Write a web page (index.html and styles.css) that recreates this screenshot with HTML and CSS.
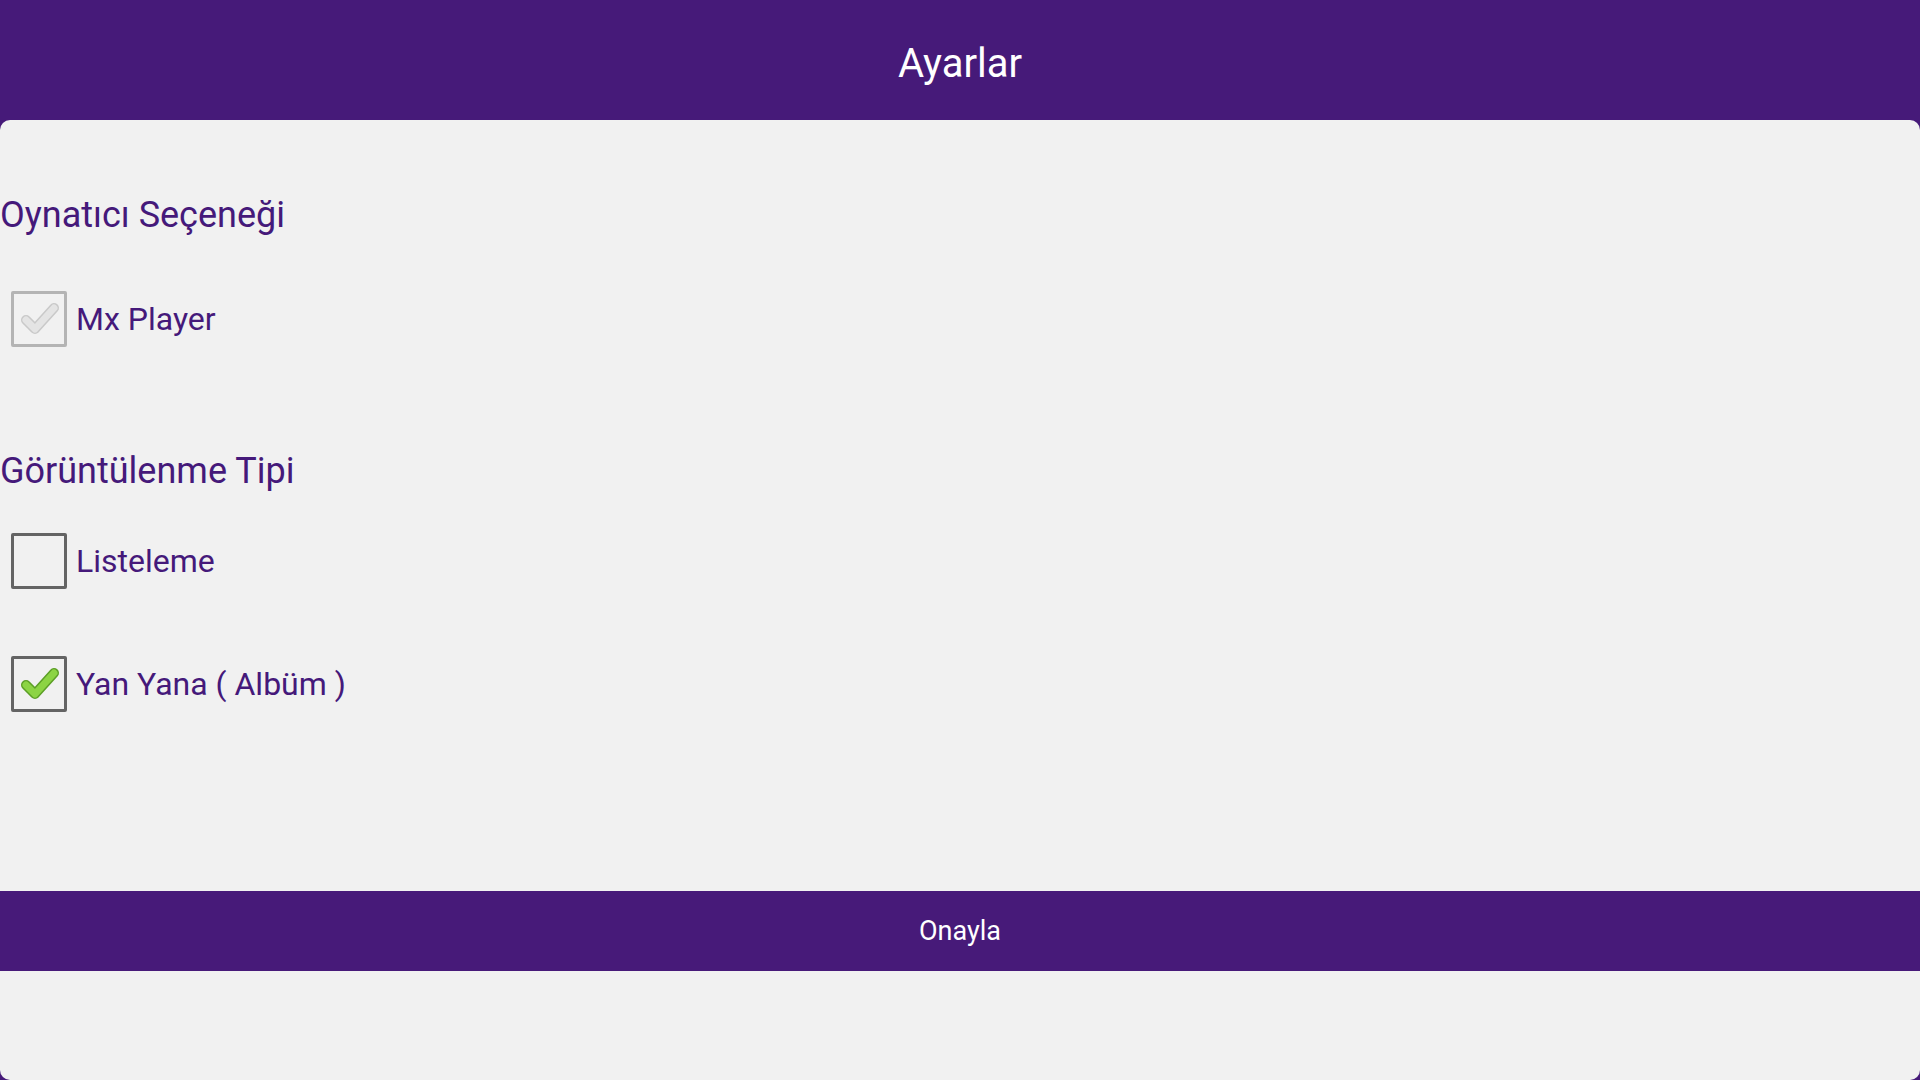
FILE: index.html
```html
<!DOCTYPE html>
<html lang="tr">
  <head>
    <meta charset="UTF-8" />
    <meta name="viewport" content="width=device-width, initial-scale=1.0" />
    <title>Ayarlar</title>
    <link rel="stylesheet" href="styles.css">
  </head>
  <body>
    <div class="header">
      <h1>Ayarlar</h1>
    </div>

    <div class="settings">
      <h2 class="section-title first">Oynatıcı Seçeneği</h2>
      <div class="option">
        <span class="box disabled">
          <svg viewBox="0 0 56 56" width="56" height="56">
            <path d="M15 29 L24 38 L43 17" class="check-edge gray-edge" />
            <path d="M15 29 L24 38 L43 17" class="check-fill gray-fill" />
          </svg>
        </span>
        <span class="label">Mx Player</span>
      </div>

      <h2 class="section-title second">Görüntülenme Tipi</h2>
      <div class="option">
        <span class="box"></span>
        <span class="label">Listeleme</span>
      </div>
      <div class="option last">
        <span class="box">
          <svg viewBox="0 0 56 56" width="56" height="56">
            <path d="M15 29 L24 38 L43 17" class="check-edge green-edge" />
            <path d="M15 29 L24 38 L43 17" class="check-fill green-fill" />
          </svg>
        </span>
        <span class="label">Yan Yana ( Albüm )</span>
      </div>

      <button class="confirm" type="button">Onayla</button>
    </div>
  </body>
</html>
```

FILE: styles.css
```css
* {
  margin: 0;
  padding: 0;
  box-sizing: border-box;
  font-family: Roboto, "Noto Sans", Arial, sans-serif;
}

body {
  background-color: #461a79;
  width: 1920px;
  height: 1080px;
  overflow: hidden;
  display: flex;
  flex-direction: column;
}

/* Header */
.header {
  height: 120px;
  padding-top: 8px;
  display: flex;
  align-items: center;
  justify-content: center;
}

.header h1 {
  color: #ffffff;
  font-size: 40px;
  font-weight: normal;
  line-height: 48px;
}

/* Settings panel */
.settings {
  flex: 1;
  background: #f1f1f1;
  border-radius: 10px;
  padding-top: 72px;
  display: flex;
  flex-direction: column;
}

.section-title {
  color: #45197a;
  font-size: 36px;
  font-weight: normal;
  line-height: 46px;
}

.section-title.second {
  margin-top: 101px;
}

.option {
  display: flex;
  align-items: center;
  gap: 9px;
  height: 56px;
  padding-left: 11px;
  margin-top: 53px;
}

.section-title.second + .option {
  margin-top: 39px;
}

.option.last {
  margin-top: 67px;
}

.label {
  color: #45197a;
  font-size: 32px;
}

/* Checkbox */
.box {
  width: 56px;
  height: 56px;
  border: 3px solid #646464;
  border-radius: 2px;
  position: relative;
  flex-shrink: 0;
}

.box.disabled {
  border-color: #b4b4b4;
}

.box svg {
  position: absolute;
  left: -3px;
  top: -3px;
}

.check-edge,
.check-fill {
  fill: none;
  stroke-linecap: round;
  stroke-linejoin: round;
}

.check-edge {
  stroke-width: 10;
}

.check-fill {
  stroke-width: 7;
}

.gray-edge {
  stroke: #c9c9c9;
}

.gray-fill {
  stroke: #e4e4e4;
}

.green-edge {
  stroke: #5c9f26;
}

.green-fill {
  stroke: #8cd444;
}

/* Confirm button */
.confirm {
  margin-top: 179px;
  height: 80px;
  border: none;
  background-color: #471a79;
  color: #ffffff;
  font-size: 27px;
  cursor: pointer;
}
```
